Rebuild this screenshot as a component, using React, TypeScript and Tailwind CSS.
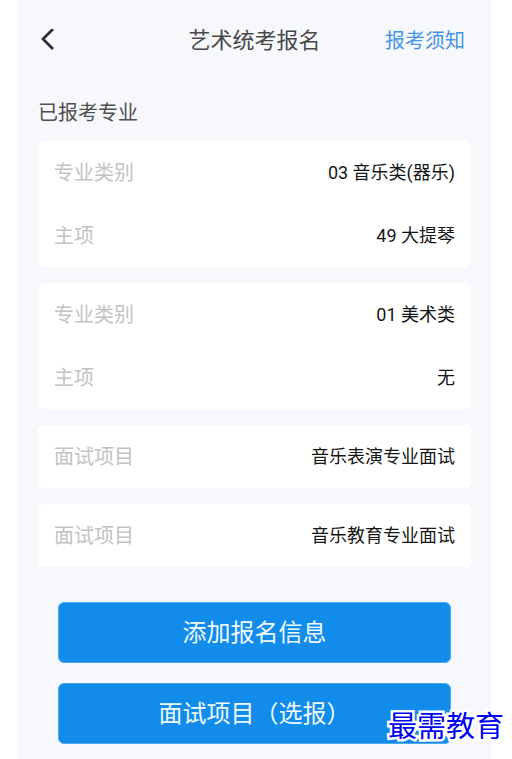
type Field = { label: string; value: string };

const groups: Field[][] = [
  [
    { label: "专业类别", value: "03 音乐类(器乐)" },
    { label: "主项", value: "49 大提琴" },
  ],
  [
    { label: "专业类别", value: "01 美术类" },
    { label: "主项", value: "无" },
  ],
  [{ label: "面试项目", value: "音乐表演专业面试" }],
  [{ label: "面试项目", value: "音乐教育专业面试" }],
];

function FieldCard({ fields }: { fields: Field[] }) {
  return (
    <dl className="rounded-md bg-white px-4">
      {fields.map((field) => (
        <div key={field.label} className="flex h-[63px] items-center justify-between">
          <dt className="text-[20px] leading-6 text-[#c3c3c3]">{field.label}</dt>
          <dd className="text-[18px] leading-6 text-[#161616]">{field.value}</dd>
        </div>
      ))}
    </dl>
  );
}

function ActionButton({ children }: { children: string }) {
  return (
    <button
      type="button"
      className="h-[61px] w-full rounded-md border border-[#4da9ee] bg-[#128ceb] text-[24px] leading-8 text-[#effaff]"
    >
      {children}
    </button>
  );
}

export default function App() {
  return (
    <div className="relative min-h-screen bg-white pr-[21px] pl-[18px] font-[Roboto,'Noto_Sans_CJK_SC',sans-serif]">
      <div className="min-h-screen bg-[#f6f8fc] px-5 pb-[14px]">
        <header className="grid h-[82px] grid-cols-[1fr_auto_1fr] items-center">
          <button type="button" aria-label="返回" className="justify-self-start">
            <svg width="20" height="24" viewBox="0 0 20 24" fill="none" stroke="#303030" strokeWidth="2.8" strokeLinecap="square">
              <path d="M14 1 5 10 14 19" />
            </svg>
          </button>
          <h1 className="text-[22px] leading-8 text-[#484848]">艺术统考报名</h1>
          <a href="#notice" className="mr-1.5 justify-self-end text-[20px] leading-8 text-[#4794e4]">
            报考须知
          </a>
        </header>

        <main>
          <h2 className="pt-[15px] pb-3 text-[20px] leading-8 text-[#505050]">已报考专业</h2>
          <div className="flex flex-col gap-4">
            {groups.map((fields, index) => (
              <FieldCard key={index} fields={fields} />
            ))}
          </div>
          <div className="mx-5 mt-[35px] flex flex-col gap-5">
            <ActionButton>添加报名信息</ActionButton>
            <ActionButton>面试项目（选报）</ActionButton>
          </div>
        </main>
      </div>

      <div className="absolute right-2 bottom-[15px] font-['KaiTi','STKaiti','Noto_Sans_CJK_SC',serif] text-[29px] leading-10 text-[#0000f5] [-webkit-text-stroke:5px_white] [paint-order:stroke_fill] [stroke-linejoin:round]">
        最需教育
      </div>
    </div>
  );
}
